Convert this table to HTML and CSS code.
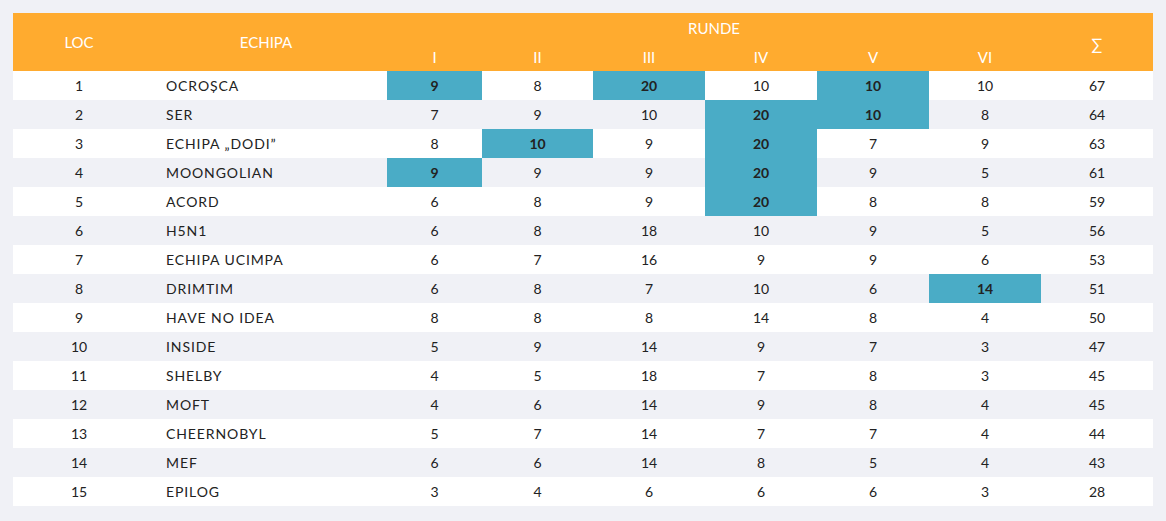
FILE: index.html
```html
<!DOCTYPE html>
<html lang="ro">
<head>
<meta charset="utf-8">
<title>Clasament</title>
<link rel="stylesheet" href="styles.css">
</head>
<body>
<table class="score">
  <colgroup>
    <col class="c-loc"><col class="c-team"><col class="c-r1"><col class="c-r2"><col class="c-r"><col class="c-r"><col class="c-r"><col class="c-r"><col class="c-r">
  </colgroup>
  <thead>
    <tr>
      <th rowspan="2">LOC</th>
      <th rowspan="2">ECHIPA</th>
      <th colspan="6" class="top">RUNDE</th>
      <th rowspan="2" class="sum">∑</th>
    </tr>
    <tr>
      <th class="bot">I</th><th class="bot">II</th><th class="bot">III</th><th class="bot">IV</th><th class="bot">V</th><th class="bot">VI</th>
    </tr>
  </thead>
  <tbody>
    <tr><td>1</td><td class="team">OCROȘCA</td><td class="hi">9</td><td>8</td><td class="hi">20</td><td>10</td><td class="hi">10</td><td>10</td><td>67</td></tr>
    <tr><td>2</td><td class="team">SER</td><td>7</td><td>9</td><td>10</td><td class="hi">20</td><td class="hi">10</td><td>8</td><td>64</td></tr>
    <tr><td>3</td><td class="team">ECHIPA „DODI”</td><td>8</td><td class="hi">10</td><td>9</td><td class="hi">20</td><td>7</td><td>9</td><td>63</td></tr>
    <tr><td>4</td><td class="team">MOONGOLIAN</td><td class="hi">9</td><td>9</td><td>9</td><td class="hi">20</td><td>9</td><td>5</td><td>61</td></tr>
    <tr><td>5</td><td class="team">ACORD</td><td>6</td><td>8</td><td>9</td><td class="hi">20</td><td>8</td><td>8</td><td>59</td></tr>
    <tr><td>6</td><td class="team">H5N1</td><td>6</td><td>8</td><td>18</td><td>10</td><td>9</td><td>5</td><td>56</td></tr>
    <tr><td>7</td><td class="team">ECHIPA UCIMPA</td><td>6</td><td>7</td><td>16</td><td>9</td><td>9</td><td>6</td><td>53</td></tr>
    <tr><td>8</td><td class="team">DRIMTIM</td><td>6</td><td>8</td><td>7</td><td>10</td><td>6</td><td class="hi">14</td><td>51</td></tr>
    <tr><td>9</td><td class="team">HAVE NO IDEA</td><td>8</td><td>8</td><td>8</td><td>14</td><td>8</td><td>4</td><td>50</td></tr>
    <tr><td>10</td><td class="team">INSIDE</td><td>5</td><td>9</td><td>14</td><td>9</td><td>7</td><td>3</td><td>47</td></tr>
    <tr><td>11</td><td class="team">SHELBY</td><td>4</td><td>5</td><td>18</td><td>7</td><td>8</td><td>3</td><td>45</td></tr>
    <tr><td>12</td><td class="team">MOFT</td><td>4</td><td>6</td><td>14</td><td>9</td><td>8</td><td>4</td><td>45</td></tr>
    <tr><td>13</td><td class="team">CHEERNOBYL</td><td>5</td><td>7</td><td>14</td><td>7</td><td>7</td><td>4</td><td>44</td></tr>
    <tr><td>14</td><td class="team">MEF</td><td>6</td><td>6</td><td>14</td><td>8</td><td>5</td><td>4</td><td>43</td></tr>
    <tr><td>15</td><td class="team">EPILOG</td><td>3</td><td>4</td><td>6</td><td>6</td><td>6</td><td>3</td><td>28</td></tr>
  </tbody>
</table>
</body>
</html>
```
FILE: styles.css
```css
html, body {
  margin: 0;
  padding: 0;
  background: #f0f1f6;
}
body {
  padding: 13px;
  font-family: Lato, "Noto Sans", sans-serif;
  color: #222;
}
.score {
  width: 1140px;
  border-collapse: collapse;
  table-layout: fixed;
  font-size: 14px;
}
.c-loc { width: 132px; }
.c-team { width: 242px; }
.c-r1 { width: 95px; }
.c-r2 { width: 111px; }
.c-r { width: 112px; }
.score th {
  background: #ffab2f;
  color: #fff;
  font-weight: 400;
  font-size: 15px;
  height: 29px;
  padding: 0;
  text-align: center;
  vertical-align: middle;
}
.score th.sum { font-size: 16px; padding-top: 2px; }
.score td {
  height: 29px;
  padding: 0;
  text-align: center;
  vertical-align: middle;
}
.score tbody tr:nth-child(odd) td { background: #fff; }
.score tbody tr:nth-child(even) td { background: #f0f1f6; }
.score td.team {
  text-align: left;
  padding-left: 21px;
  letter-spacing: 0.9px;
}
.score tbody tr td.hi {
  background: #4aacc6;
  font-weight: 700;
}
```
